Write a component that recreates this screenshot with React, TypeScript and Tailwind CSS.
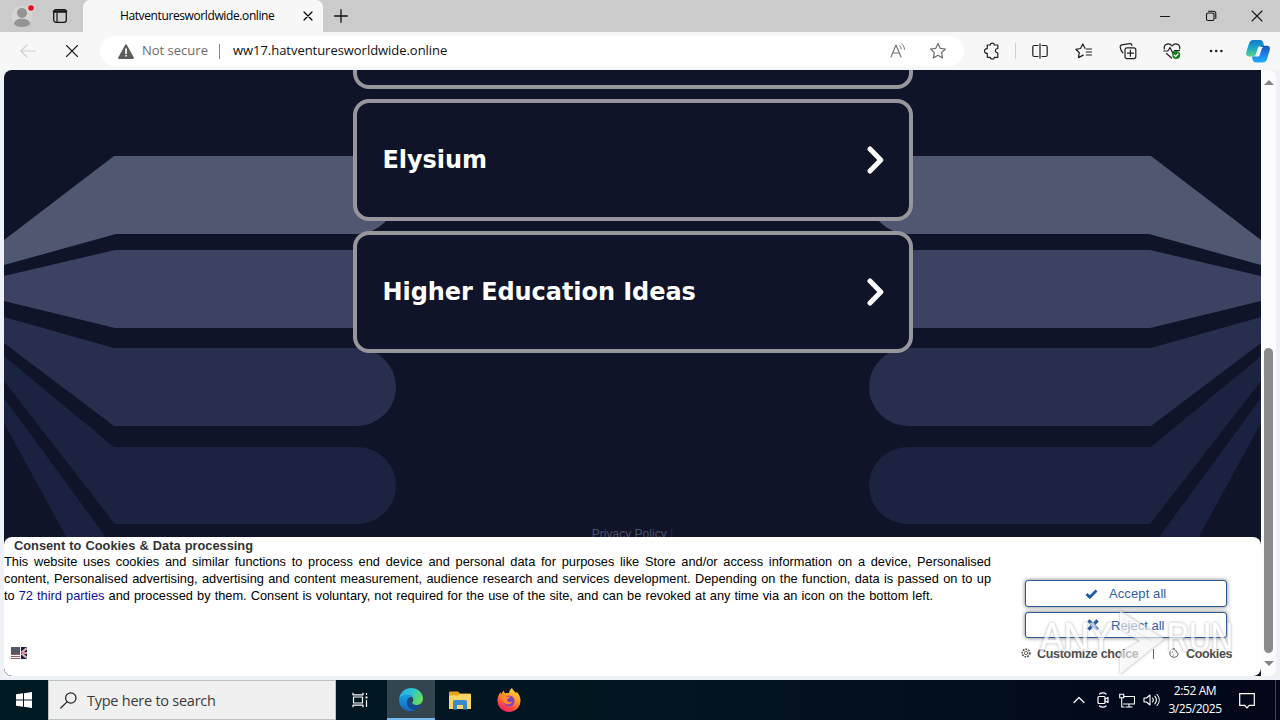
import type { ReactNode } from "react";

type IconProps = { w: number; h: number; children: ReactNode; className?: string };

function Icon({ w, h, children, className = "" }: IconProps) {
  return (
    <svg
      width={w}
      height={h}
      viewBox={`0 0 ${w} ${h}`}
      fill="none"
      stroke="currentColor"
      strokeWidth="1.2"
      strokeLinecap="round"
      strokeLinejoin="round"
      className={`block shrink-0 ${className}`}
    >
      {children}
    </svg>
  );
}

const ui = "font-['Open_Sans','Noto_Sans',sans-serif]";

function TitleBar() {
  return (
    <header className="flex h-8 shrink-0 bg-[#cbcbcb]">
      <div className="flex w-[83px] items-center rounded-br-[4px] pl-[11px]">
        <Icon w={24} h={26} className="mt-[2px]">
          <circle cx="11" cy="12" r="10.5" fill="#d6d4d2" stroke="none" />
          <circle cx="11" cy="9" r="5" fill="#949494" stroke="none" />
          <path d="M3 20c0-7 16-7 16 0-2 4-14 4-16 0z" fill="#949494" stroke="none" />
          <circle cx="20" cy="4" r="3.6" fill="#f3d9d9" stroke="none" />
          <circle cx="20" cy="4" r="2.8" fill="#e00b1c" stroke="none" />
        </Icon>
        <Icon w={16} h={16} className="ml-[17px] text-[#151515]">
          <rect x="1.7" y="1.7" width="12.6" height="12.6" rx="2.2" strokeWidth="1.3" />
          <path d="M2 3.5h12" strokeWidth="2.4" />
          <path d="M5 5v9" strokeWidth="1.2" />
        </Icon>
      </div>
      <div className={`flex w-[240px] items-center rounded-t-[7px] bg-[#f7f7f7] pl-[37px] text-[12px] text-black ${ui}`}>
        <span className="w-[182px] tracking-[-0.39px]">Hatventuresworldwide.online</span>
        <Icon w={12} h={12}>
          <path d="M2 2l8 8M10 2l-8 8" />
        </Icon>
      </div>
      <div className="flex w-8 items-center justify-center pl-[3px] text-[#111]">
        <Icon w={14} h={14}>
          <path d="M7 .7v12.6M.7 7h12.6" strokeWidth="1.3" />
        </Icon>
      </div>
      <div className="ml-auto flex items-center text-[#151515]">
        <div className="flex w-[46px] justify-center">
          <Icon w={10} h={10}>
            <path d="M.5 5.5h9" strokeWidth="1" />
          </Icon>
        </div>
        <div className="flex w-[46px] justify-center">
          <Icon w={12} h={12}>
            <rect x="1.5" y="3" width="7.5" height="7.5" rx="1.5" strokeWidth="1.1" />
            <path d="M3.5 1.2h5a2.3 2.3 0 0 1 2.3 2.3v5" strokeWidth="1.1" />
          </Icon>
        </div>
        <div className="flex w-[46px] justify-center">
          <Icon w={12} h={12}>
            <path d="M1 1l10 10M11 1L1 11" strokeWidth="1.1" />
          </Icon>
        </div>
      </div>
    </header>
  );
}

function Cell({ children, className = "w-[44px]" }: { children: ReactNode; className?: string }) {
  return <div className={`flex h-full shrink-0 items-center justify-center ${className}`}>{children}</div>;
}

function Toolbar() {
  return (
    <div className="flex h-[38px] shrink-0 items-center bg-[#f7f7f7] text-[#202020]">
      <Cell className="w-[56px] text-[#cfcfcf]">
        <Icon w={16} h={14}>
          <path d="M15.5 7H.8M7 .8L.8 7 7 13.2" />
        </Icon>
      </Cell>
      <Cell className="w-[32px]">
        <Icon w={12} h={12}>
          <path d="M.5 .5l11 11M11.5 .5l-11 11" strokeWidth="1.1" />
        </Icon>
      </Cell>
      <div className={`ml-[12px] flex h-[30px] w-[864px] shrink-0 items-center rounded-full bg-white pl-[18px] ${ui}`}>
        <Icon w={16} h={15}>
          <path d="M8 1.2L15 14H1z" fill="#5c5c5c" stroke="#5c5c5c" strokeWidth="1.8" />
          <path d="M8 5v4.2M8 11.7v.1" stroke="#fff" strokeWidth="1.7" />
        </Icon>
        <span className="ml-[8px] w-[77px] whitespace-nowrap text-[13px] text-[#6b6b6b]">Not secure</span>
        <span className="h-[15px] w-px bg-[#8a8a8a]" />
        <span className="ml-[13px] text-[13px] tracking-[-0.04px] text-[#111]">ww17.hatventuresworldwide.online</span>
        <Icon w={16} h={16} className="mr-[23px] ml-auto text-[#777]">
          <path d="M1 14L6 2l5 12M2.8 10h6.4" />
          <path d="M9.5 2.6c1.2.8 1.7 2 1.7 3.4M11.5 .8c1.9 1.4 2.9 3.4 3 5.6" strokeWidth="1" />
        </Icon>
        <Icon w={18} h={18} className="mr-[17px] text-[#6c6c6c]">
          <path d="M9 1.5l2.2 4.8 5.2.7-3.8 3.6.9 5.3L9 13.3l-4.6 2.6.9-5.3L1.6 7l5.2-.7z" />
        </Icon>
      </div>
      <Cell className="w-[51px] pl-[4px]">
        <Icon w={18} h={18}>
          <path d="M4.300 3h3c0-2.600 4-2.600 4 0h3.500v3.500c-3.200-.2-3.200 4.500 0 4.300V15.300h-3.500c0 2.400-4 2.400-4 0h-3v-3.900c-3.700.4-3.700-5.200 0-4.800z" />
        </Icon>
      </Cell>
      <span className="h-4 w-px shrink-0 bg-[#cfcfcf]" />
      <Cell className="w-[46px] pl-px">
        <Icon w={16} h={16}>
          <path d="M6 2.5H2.3C1.3 2.5.8 3 .8 4v8c0 1 .5 1.5 1.5 1.5H6M10 2.5h3.7c1 0 1.5.5 1.5 1.5v8c0 1-.5 1.5-1.5 1.5H10M8 .8v14.4" />
        </Icon>
      </Cell>
      <Cell>
        <Icon w={18} h={16}>
          <path d="M11.3 6h5.2M11.3 9h5.2M11.3 12h5.2M10 5.3L7.8 1 5.5 5.5l-4.7.8 3.5 3.4-.8 4.9 4.7-2.5" />
        </Icon>
      </Cell>
      <Cell>
        <Icon w={18} h={18}>
          <rect x="6" y="5.8" width="10.8" height="10.8" rx="2" />
          <path d="M11.4 8.2v6M8.4 11.2h6M13 3.5c-.3-1.3-1.2-2-2.4-1.8L3 2.9C1.6 3.1 1 4 1.2 5.2c.4 2.500 1 4.200 2.600 5.600" />
        </Icon>
      </Cell>
      <Cell>
        <Icon w={18} h={18}>
          <path d="M1.3 7C.5 1.5 6.3 .5 9 4c2.7-3.500 8.500-2.500 7.700 3M.8 9h4L7 5.500l3 6L11.500 8.500h5M3.500 11.500L8.500 16" />
          <circle cx="13.2" cy="13" r="4" fill="#15831b" stroke="none" />
          <path d="M11.2 13.200l1.400 1.300 2.500-2.700" stroke="#fff" />
        </Icon>
      </Cell>
      <Cell>
        <Icon w={14} h={4}>
          <g fill="#202020" stroke="none">
            <circle cx="2" cy="2" r="1.3" />
            <circle cx="7.200" cy="2" r="1.3" />
            <circle cx="12.400" cy="2" r="1.3" />
          </g>
        </Icon>
      </Cell>
      <Cell className="w-[42px] pr-[3px]">
        <svg width="24" height="23" viewBox="0 0 24 23" className="block">
          <defs>
            <linearGradient id="cpA" x1="0" y1="0" x2="0" y2="1">
              <stop offset="0" stopColor="#1478cf" />
              <stop offset=".5" stopColor="#1ba9c7" />
              <stop offset="1" stopColor="#5bd292" />
            </linearGradient>
            <linearGradient id="cpB" x1="0" y1="0" x2="0" y2="1">
              <stop offset="0" stopColor="#1554bf" />
              <stop offset=".6" stopColor="#2487ec" />
              <stop offset="1" stopColor="#19b2fa" />
            </linearGradient>
          </defs>
          <path d="M7 0h7c2 0 3 1.500 3.500 3.500L18 6h-3c-2 0-3 1-3.500 3L10 14c-.6 1.600-1.500 2.500-3 2.500H3C.5 16.500-.4 14.500.3 12L3 3.500C3.700 1.200 5 0 7 0z" fill="url(#cpA)" />
          <path d="M17 22.500h-7c-2 0-3-1.500-3.500-3.500L6 16.500h2c2 0 3-1 3.500-3L13.500 8c.5-1.500 1.500-2.200 3-2.200H21c2.500 0 3.400 2 2.700 4.500L21 19c-.7 2.200-2 3.500-4 3.500z" fill="url(#cpB)" />
          <path d="M13.500 7h4l-1.500 1-2.300 7c-.4 1.200-1 1.500-2 1.500H8.500c1.500-.2 2.200-1 2.700-2.500z" fill="#f5fbff" />
        </svg>
      </Cell>
    </div>
  );
}

function Wing() {
  return (
    <g>
      <path d="M0 170L110 86h243a39 39 0 0 1 0 78H112L0 195z" fill="#505771" />
      <path d="M0 206l111-26h242a39 39 0 0 1 0 78H111L0 231z" fill="#3c4261" />
      <path d="M0 247l110 31h243a39 39 0 0 1 0 78H110L0 273z" fill="#282e4e" />
      <path d="M0 286l110 91h243.500a38.500 38.500 0 0 1 0 77H111L0 311z" fill="#1c2341" />
      <path d="M0 328l104 142H64L0 353z" fill="#1b2241" />
    </g>
  );
}

function LinkCard({ label }: { label: string }) {
  return (
    <a className="mt-[10px] flex h-[122px] w-[560px] shrink-0 items-center justify-between rounded-[16px] border-4 border-[#97979b] bg-[#101428] pr-[23px] pl-[26px] text-[24px] font-bold text-white">
      <span className="font-['DejaVu_Sans',sans-serif] tracking-[-0.06px]">{label}</span>
      <Icon w={20} h={28}>
        <path d="M4 3l10.800 11L4 25" strokeWidth="5" strokeLinecap="round" />
      </Icon>
    </a>
  );
}

function Consent() {
  return (
    <section className="relative flex h-[139px] w-full shrink-0 rounded-[8px] bg-white font-['Liberation_Sans',sans-serif] text-black">
      <div className="flex w-[987px] shrink-0 flex-col whitespace-nowrap text-[12.8px] leading-[17px]">
        <h2 className="ml-[10px] w-[239px] text-[12.8px] font-bold text-[#333] [text-align-last:justify]">
          Consent to Cookies &amp; Data processing
        </h2>
        <p className="-mt-px [text-align-last:justify]">
          This website uses cookies and similar functions to process end device and personal data for purposes like Store and/or access information on a device, Personalised
        </p>
        <p className="[text-align-last:justify]">
          content, Personalised advertising, advertising and content measurement, audience research and services development. Depending on the function, data is passed on to up
        </p>
        <p className="w-[929px] [text-align-last:justify]">
          to <span className="text-[#0d0da0]">72 third parties</span> and processed by them. Consent is voluntary, not required for the use of the site, and can be revoked at any time via an icon on the bottom left.
        </p>
        <svg width="16" height="12" viewBox="0 0 16 12" className="mt-[43px] ml-[7px] block">
          <path d="M0 0h16v12H0z" fill="#fff" />
          <path d="M0 1h9M0 3h9M0 7.500h9M0 9.500h9M0 11.500h9" stroke="#8f5d62" />
          <path d="M0 0h9v7H0z" fill="#555966" />
          <path d="M10 0h6v12h-6z" fill="#19193e" />
          <path d="M10 6h6M10 6l6-5M10 6l6 5" stroke="#fff" strokeWidth="2" />
          <path d="M10 6h6" stroke="#b53541" />
          <path d="M10 6l6-5M10 6l6 5" stroke="#963341" strokeWidth=".7" />
        </svg>
      </div>
      <div className="flex flex-col pt-[43px] pl-[30px]">
        <button className="ml-[4px] flex h-[27px] w-[202px] items-center rounded-[3px] border border-[#2c5a98] bg-white pl-[59px] text-[13px] text-[#2f5da8] shadow-[0_0_4px_#777]">
          <Icon w={13} h={10}>
            <path d="M1.500 5l3.300 3.200L11.500 1.600" stroke="#1f56a6" strokeWidth="2.800" strokeLinecap="butt" strokeLinejoin="miter" />
          </Icon>
          <span className="ml-[11px] pt-px tracking-[0.1px]">Accept all</span>
        </button>
        <button className="mt-[5px] ml-[4px] flex h-[26px] w-[202px] items-center rounded-[3px] border border-[#2c5a98] bg-white pl-[61px] text-[13px] text-[#2f5da8] shadow-[0_0_4px_#777]">
          <Icon w={12} h={12}>
            <path d="M1.400 1.400l9.200 9.200M10.600 1.400l-9.200 9.200" stroke="#1f56a6" strokeWidth="3.200" strokeLinecap="butt" />
          </Icon>
          <span className="ml-[12px] pt-[2px]">Reject all</span>
        </button>
        <div className="mt-[8px] flex h-4 items-center whitespace-nowrap text-[12.5px] font-bold text-[#4d4d4d]">
          <Icon w={10} h={10} className="-mt-[2px]">
            <circle cx="5" cy="5" r="3.800" strokeWidth="1.600" strokeDasharray="1.800 1" strokeLinecap="butt" />
            <circle cx="5" cy="5" r="1.700" strokeWidth=".8" />
          </Icon>
          <span className="ml-[6px] w-[102px] tracking-[-0.3px]">Customize choice</span>
          <span className="mr-[15px] ml-[14px] h-[10px] w-px bg-[#666]" />
          <Icon w={10} h={10} className="-mt-[2px]">
            <path d="M5 .8a4.200 4.200 0 1 0 4.200 4.500C8 5 7.500 4 7.500 3 6.500 3 5.500 2 5 .8zM3.500 4v.1M4.500 7v.1" strokeWidth=".9" />
          </Icon>
          <span className="ml-[7px] tracking-[-0.35px]">Cookies</span>
        </div>
      </div>
      <svg width="204" height="66" viewBox="0 0 204 66" className="pointer-events-none absolute top-[73px] left-[1034px] block opacity-65 drop-shadow-[0_0_1.500px_#888]">
        <g fill="#fff" stroke="#fff" strokeWidth=".6" fontFamily="Liberation Sans" fontSize="40">
          <text x="2" y="41" textLength="73" lengthAdjust="spacingAndGlyphs">ANY</text>
          <text x="129" y="41" textLength="66" lengthAdjust="spacingAndGlyphs">RUN</text>
        </g>
        <path d="M82 1l44 28-44 35V43l20-12-20-12z" fill="#fff" opacity=".9" />
        <path d="M82 1l44 28-44 35M88 16l26 15" stroke="#ddd" fill="none" />
      </svg>
    </section>
  );
}

function Page() {
  return (
    <div className="flex h-[610px] shrink-0 bg-[#eef1f5] px-[4px] pb-[4px]">
      <main className="relative flex w-[1257px] shrink-0 flex-col overflow-hidden rounded-l-[8px] bg-[#101428]">
        <svg width="1257" height="470" viewBox="0 0 1257 470" className="absolute inset-x-0 top-0 block">
          <Wing />
          <g transform="translate(1257 0) scale(-1 1)">
            <Wing />
          </g>
        </svg>
        <div className="relative flex h-[467px] flex-col items-center overflow-hidden">
          <div className="h-[19px] w-[560px] shrink-0 rounded-b-[16px] border-4 border-t-0 border-[#97979b] bg-[#101428]" />
          <LinkCard label="Elysium" />
          <LinkCard label="Higher Education Ideas" />
          <div className="mt-[174px] shrink-0 font-['Liberation_Sans',sans-serif] text-[12px] leading-[14px] tracking-[0.02px] text-[#4b5168]">
            Privacy Policy <span className="text-[#272c42]">|</span>
          </div>
        </div>
        <Consent />
      </main>
      <div className="flex w-[15px] shrink-0 flex-col items-center rounded-r-[7px] bg-[#fcfcfc] py-[10px]">
        <Icon w={10} h={5}>
          <path d="M0 5L5 0l5 5z" fill="#858585" stroke="none" />
        </Icon>
        <div className="mt-auto h-[305px] w-[9px] rounded-full bg-[#8b8b8b]" />
        <Icon w={10} h={5} className="mt-[8px]">
          <path d="M0 0l5 5 5-5z" fill="#858585" stroke="none" />
        </Icon>
      </div>
    </div>
  );
}

function Taskbar() {
  return (
    <footer className={`flex h-10 shrink-0 items-center bg-linear-to-r from-[#001a24] via-[#021520] to-[#030719] text-white ${ui}`}>
      <div className="flex w-12 justify-center">
        <Icon w={16} h={16}>
          <path d="M0 2.300L7 1.300v6.200H0zM8 1.200L16 0v7.500H8zM0 8.500h7v6.200l-7-1zM8 8.500h8V16l-8-1.200z" fill="#fff" stroke="none" />
        </Icon>
      </div>
      <div className="flex h-full w-[288px] items-center border border-[#bcc1c3] bg-[#f0f0f0] pl-[11px] text-[#3a3a3a]">
        <Icon w={17} h={17} className="text-[#222]">
          <circle cx="10.800" cy="6" r="5.200" />
          <path d="M7 9.800L.8 16" />
        </Icon>
        <span className="ml-[10px] pt-px text-[14.5px] tracking-[-0.25px]">Type here to search</span>
      </div>
      <div className="flex w-[51px] justify-center pr-[2px]">
        <Icon w={17} h={16}>
          <path d="M1 .8v2h10v-2M1 15.200v-2h10v2M1.500 5h9v6h-9zM14.500 1v2M14.500 8v7" strokeLinecap="butt" />
          <path d="M13.500 4.500h2v2h-2z" fill="#fff" stroke="none" />
        </Icon>
      </div>
      <div className="flex h-full w-12 items-center justify-center border-b-2 border-[#76b9ed] bg-[#33464f] pt-[2px]">
        <svg width="24" height="24" viewBox="0 0 24 24" className="block">
          <defs>
            <linearGradient id="edT" x1="0" y1=".3" x2="1" y2=".6">
              <stop offset="0" stopColor="#2aa9e8" />
              <stop offset=".5" stopColor="#2fc6cf" />
              <stop offset="1" stopColor="#6be04e" />
            </linearGradient>
            <linearGradient id="edB" x1="0" y1="0" x2="0" y2="1">
              <stop offset="0" stopColor="#1e9fe0" />
              <stop offset="1" stopColor="#1565c0" />
            </linearGradient>
          </defs>
          <path d="M.2 11C.8 4.500 6 0 12 0c7 0 12 5 12 10.500 0 4-3 6.500-6.500 6.500-3 0-4.500-1-4.500-2s1.200-1.500 1.200-3.300C14.200 9 12 7 9 7 5 7 1.500 9 .2 11z" fill="url(#edT)" />
          <path d="M.2 11C1.500 8 5 6.500 8.500 6.500c2.500 0 4.500 1.300 5.200 3-3-.7-5.700 1.500-5.700 5 0 4.500 4 7.500 8.500 7.200C9 26-.8 20.500.2 11z" fill="url(#edB)" />
          <path d="M8 14c0-2.500 1.500-4.500 3.500-4.700 1.700.4 2.700 1.500 2.700 2.800 0 1.400-1.200 2-1.200 3 0 1.200 2 2.200 4.500 2.200 2 0 3.500-.5 4.500-1.200-.8 2.600-3 4.700-5.500 5.500C12 22.200 8 19 8 14z" fill="#124c94" />
          <path d="M11.600 9.500c1.600.4 2.600 1.300 2.600 2.600 0 1.400-1.200 2-1.200 3 0 .8.900 1.500 2.300 1.900-3-.3-4.600-2-4.600-4.200 0-1.300.3-2.500.9-3.300z" fill="#33464f" />
        </svg>
      </div>
      <div className="flex w-[50px] justify-center">
        <svg width="22" height="19" viewBox="0 0 22 19" className="block">
          <path d="M0 1.500Q0 .5 1 .5h8l2 2h10.500V18H0z" fill="#e9a620" />
          <path d="M0 4.500h9l1.500-1.500H22V18H0z" fill="#fbd566" />
          <path d="M4 18.500V11q0-2 2-2h10q2 0 2 2v7.500h-4V14H8v4.500z" fill="#3b8ac9" />
        </svg>
      </div>
      <div className="flex w-[48px] justify-center">
        <svg width="24" height="24" viewBox="0 0 24 24" className="block">
          <defs>
            <linearGradient id="ffx" x1=".8" y1="0" x2=".3" y2="1">
              <stop offset="0" stopColor="#ffe23e" />
              <stop offset=".4" stopColor="#ff9a24" />
              <stop offset=".75" stopColor="#ff4940" />
              <stop offset="1" stopColor="#ec1b6a" />
            </linearGradient>
          </defs>
          <path d="M15 0c1 2.500 3 3.500 4 5 .5-.3.5-.8.5-1.300C22 6 23.500 9 23.500 12.500 23.500 19 18.500 24 12 24S.5 19 .5 12.500C.5 9 2 6 3.500 4c0 1 .3 1.700.8 2.200C4.800 4.800 6 3.300 7 2.500c0 1.500.7 2.500 1.500 3 1-.5 2.500-.5 3.500-.2C12 3 13.500 1 15 0z" fill="url(#ffx)" />
          <circle cx="12" cy="13" r="5.500" fill="#8040c9" />
          <path d="M4 8c2.500-1.500 4.500-.5 5.500.5H13c.5 1-1.500 2-3 2.500-.5 3 3 4 5.500 2.500-1 3-6 4-8.500 1C5 13 4 10 4 8z" fill="#ff8a2a" />
        </svg>
      </div>
      <div className="ml-auto flex h-full items-center">
        <Cell className="w-[24px]">
          <Icon w={12} h={8}>
            <path d="M1 6.500l5-5 5 5" />
          </Icon>
        </Cell>
        <Cell className="w-[24px]">
          <Icon w={12} h={16}>
            <rect x="1" y="4.500" width="7" height="7" rx="1" />
            <path d="M8 7l3-1.500v5L8 9M2.500 2C4 .5 7.500 .5 9 2M2.500 14c1.500 1.500 5 1.500 6.500 0" />
          </Icon>
        </Cell>
        <Cell className="w-[24px]">
          <Icon w={16} h={15}>
            <path d="M5.500 3.500h10v7.500H4.500M10 11v3M7 14h6M.7 1.200h4v3.600h-4zM2.700 5v9h2.500" strokeWidth="1.1" strokeLinejoin="miter" />
          </Icon>
        </Cell>
        <Cell className="w-[24px]">
          <Icon w={17} h={14}>
            <path d="M1 5h2.500L7 2v10L3.500 9H1zM9.500 5c1 1.200 1 2.800 0 4M11.800 3.200c2 2.300 2 5.300 0 7.600M14 1.500c3 3.300 3 7.700 0 11" strokeWidth="1.1" />
          </Icon>
        </Cell>
        <div className="flex w-16 flex-col items-center text-[12px] leading-[18px] tracking-[-0.4px] whitespace-nowrap">
          <span>2:52 AM</span>
          <span>3/25/2025</span>
        </div>
        <Cell className="w-[40px]">
          <Icon w={16} h={16} className="mt-px">
            <path d="M.7 .7h14.600v11.600h-5L8 14.900l-2.300-2.600h-5z" strokeLinejoin="miter" />
          </Icon>
        </Cell>
        <span className="mr-[4px] ml-[8px] h-full w-px bg-[#3d414f]" />
      </div>
    </footer>
  );
}

export default function App() {
  return (
    <div className="flex h-[720px] w-[1280px] flex-col overflow-hidden bg-[#f7f7f7]">
      <TitleBar />
      <Toolbar />
      <Page />
      <Taskbar />
    </div>
  );
}
